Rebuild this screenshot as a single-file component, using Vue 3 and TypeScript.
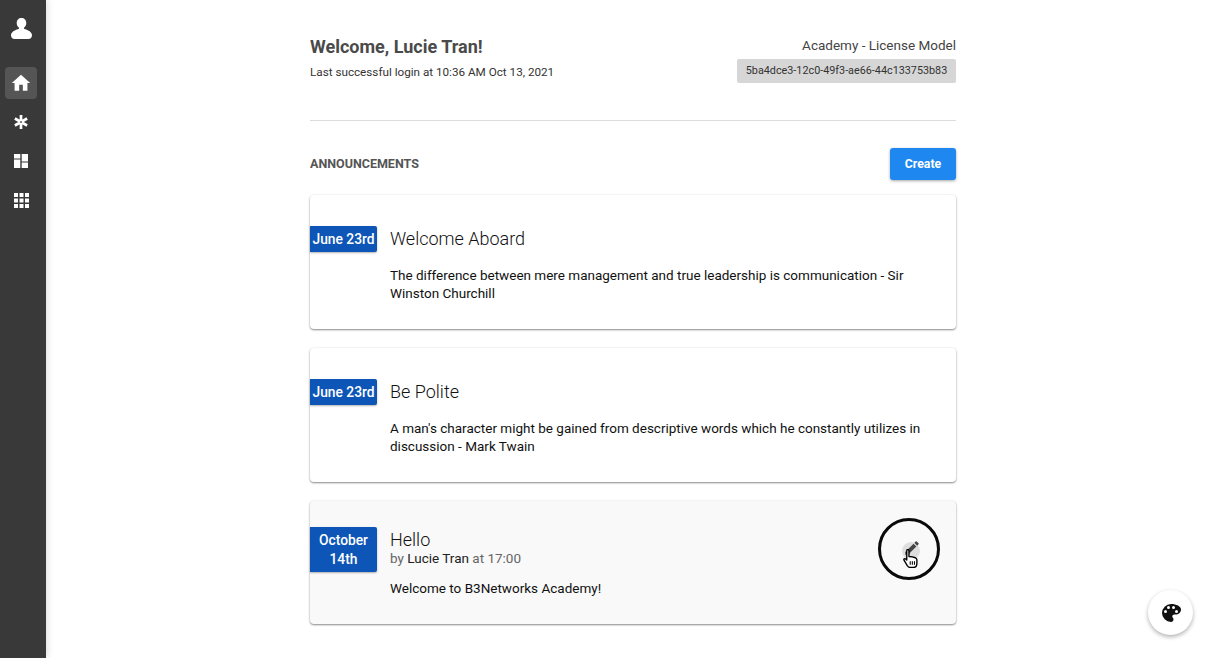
<script setup lang="ts">
interface Post {
  date: string[];
  title: string;
  body: string;
  author?: string;
  time?: string;
  hover?: boolean;
}
const posts: Post[] = [
  { date: ['June 23rd'], title: 'Welcome Aboard', body: 'The difference between mere management and true leadership is communication - Sir Winston Churchill' },
  { date: ['June 23rd'], title: 'Be Polite', body: "A man's character might be gained from descriptive words which he constantly utilizes in discussion - Mark Twain" },
  { date: ['October', '14th'], title: 'Hello', author: 'Lucie Tran', time: '17:00', body: 'Welcome to B3Networks Academy!', hover: true },
];
</script>

<template>
  <div class="app">
    <nav class="rail">
      <svg class="avatar" viewBox="0 0 21 21" width="21" height="21"><path fill="#fff" d="M10.500 0C7.700 0 5.700 2.100 5.700 4.900c0 2 .9 3.700 2.200 4.700v1.300C4.500 11.800 0 13.400 0 17.300 0 19.600 1.500 21 3.500 21h14c2 0 3.500-1.400 3.500-3.700 0-3.900-4.500-5.500-7.900-6.400V9.600c1.300-1 2.200-2.700 2.200-4.700C15.300 2.100 13.300 0 10.500 0z"/></svg>
      <div class="rail-item active">
        <svg viewBox="0 0 24 24" width="22" height="22"><path fill="#fff" d="M10 20.500v-6.500h4v6.500h5v-8.500h3L12 3 2 12h3v8.500z"/></svg>
      </div>
      <div class="rail-item">
        <svg viewBox="0 0 14 14" width="14" height="14"><path stroke="#fff" stroke-width="2.700" d="M7 0v14M.9 3.500l12.200 7M.9 10.500l12.200-7"/><circle cx="7" cy="7" r="1.100" fill="#666"/></svg>
      </div>
      <div class="rail-item">
        <svg viewBox="0 0 14 14" width="14" height="14"><path fill="#fff" d="M0 0h6.300v4.500H0zM0 5.500h6.300V14H0zM7.700 0H14v7.500H7.700zM7.700 8.500H14V14H7.700z"/></svg>
      </div>
      <div class="rail-item">
        <svg viewBox="0 0 15 15" width="15" height="15"><path fill="#fff" d="M0 0h4v4H0zM5.500 0h4v4h-4zM11 0h4v4h-4zM0 5.500h4v4H0zM5.500 5.500h4v4h-4zM11 5.500h4v4h-4zM0 11h4v4H0zM5.500 11h4v4h-4zM11 11h4v4h-4z"/></svg>
      </div>
    </nav>

    <main class="main">
      <div class="content">
        <header class="head">
          <div>
            <h1>Welcome, Lucie Tran!</h1>
            <p class="login">Last successful login at 10:36 AM Oct 13, 2021</p>
          </div>
          <div class="license">
            <div class="license-name">Academy - License Model</div>
            <div class="license-id">5ba4dce3-12c0-49f3-ae66-44c133753b83</div>
          </div>
        </header>

        <div class="section-head">
          <h2>ANNOUNCEMENTS</h2>
          <button class="create" type="button">Create</button>
        </div>

        <section class="list">
          <article v-for="post in posts" :key="post.title" class="card" :class="{ hover: post.hover }">
            <div class="date"><span v-for="line in post.date" :key="line">{{ line }}</span></div>
            <div class="text">
              <h3>{{ post.title }}</h3>
              <p v-if="post.author" class="meta">by <b>{{ post.author }}</b> at {{ post.time }}</p>
              <p class="body">{{ post.body }}</p>
            </div>
            <div v-if="post.hover" class="ring">
              <span class="ripple"></span>
              <svg class="pen" viewBox="0 0 24 24" width="18" height="18"><path fill="#444" d="M3 17.250V21h3.750L17.810 9.940l-3.750-3.750L3 17.250zM20.710 7.040a1 1 0 0 0 0-1.410l-2.340-2.340a1 1 0 0 0-1.410 0l-1.830 1.830 3.750 3.750 1.830-1.830z"/></svg>
              <svg class="hand" viewBox="1 1 13.500 18" width="15" height="19"><path fill="#fff" stroke="#000" stroke-width="1.300" stroke-linejoin="round" d="M5 1.500c.8 0 1.300.6 1.300 1.400v5.200c2.500.2 7.500.7 7.500 3v3.400c0 2.300-1.300 4-3.300 4H7.300c-1.200 0-1.900-.7-2.600-1.700L1.600 11.500c-.5-.8.700-1.900 1.600-1.100l1 1V2.900c0-.8.100-1.400.8-1.400z"/><path stroke="#000" stroke-width="1" d="M7.500 12.500v3.500M9.500 12.500v3.500M11.500 12.500v3.500"/></svg>
            </div>
          </article>
        </section>
      </div>
    </main>

    <button class="fab" type="button" aria-label="Theme">
      <svg viewBox="0 0 24 24" width="24" height="24"><path fill="#111" d="M12 3a9 9 0 0 0 0 18c1.400 0 2.500-1.100 2.500-2.500 0-.6-.2-1.200-.6-1.700-.4-.4-.6-.9-.6-1.400 0-1.100.9-2 2-2h1.700c2.700 0 5-2.200 5-5C22 5.500 17.500 3 12 3zM6.500 12a1.500 1.500 0 1 1 0-3 1.500 1.500 0 0 1 0 3zm3-4a1.500 1.500 0 1 1 0-3 1.500 1.500 0 0 1 0 3zm5 0a1.500 1.500 0 1 1 0-3 1.500 1.500 0 0 1 0 3zm3 4a1.500 1.500 0 1 1 0-3 1.500 1.500 0 0 1 0 3z"/></svg>
    </button>
  </div>
</template>

<style>
html, body { margin: 0; background: #fff; overflow: hidden; }
</style>

<style scoped>
.app {
  display: flex;
  height: 658px;
  overflow: hidden;
  font-family: Roboto, "Liberation Sans", sans-serif;
  color: #111;
}
.rail {
  width: 46px;
  flex: none;
  background: #393939;
  box-shadow: 2px 0 6px rgba(0, 0, 0, 0.12);
  display: flex;
  flex-direction: column;
  align-items: center;
  padding: 18px 4px 0 0;
  box-sizing: border-box;
}
.avatar { margin-bottom: 28px; }
.rail-item {
  width: 32px;
  height: 32px;
  margin-bottom: 7px;
  border-radius: 4px;
  display: flex;
  align-items: center;
  justify-content: center;
}
.rail-item.active { background: #555; }
.main { flex: 1; display: flex; justify-content: center; padding-left: 2px; }
.content { width: 646px; }
.head {
  display: flex;
  justify-content: space-between;
  height: 121px;
  box-sizing: border-box;
  padding-top: 36px;
  border-bottom: 1px solid #dcdcdc;
}
h1 {
  margin: 0;
  font-size: 18px;
  line-height: 22px;
  font-weight: 700;
  color: #4a4a4a;
}
.login { margin: 6px 0 0; font-size: 11.700px; line-height: 16px; color: #333; }
.license { display: flex; flex-direction: column; align-items: flex-end; }
.license-name { font-size: 13.500px; line-height: 18px; color: #444; margin-bottom: 5px; }
.license-id {
  background: #d6d6d6;
  border-radius: 2px;
  font-size: 10.800px;
  line-height: 24px;
  height: 24px;
  width: 219px;
  text-align: center;
  color: #333;
}
.section-head {
  display: flex;
  justify-content: space-between;
  align-items: center;
  margin-top: 27px;
}
h2 { margin: 0 0 2px; font-size: 12.500px; font-weight: 700; color: #555; }
.create {
  width: 66px;
  height: 32px;
  border: 0;
  border-radius: 3px;
  background: #1e88f0;
  color: #fff;
  font: 700 12.300px Roboto, sans-serif;
  box-shadow: 0 1px 3px rgba(0, 0, 0, 0.35);
  padding: 0;
}
.list { display: flex; flex-direction: column; gap: 19px; margin-top: 15px; }
.card {
  position: relative;
  display: flex;
  align-items: flex-start;
  background: #fff;
  border-radius: 4px;
  box-shadow: 0 1px 2px rgba(0, 0, 0, 0.45), 0 0 3px rgba(0, 0, 0, 0.06);
  height: 134px;
  box-sizing: border-box;
  padding-top: 31px;
}
.card.hover { background: #f9f9f9; height: 123px; padding-top: 26px; }
.date {
  width: 67px;
  flex: none;
  background: #0d56b8;
  color: #fff;
  font-size: 13.800px;
  font-weight: 500;
  line-height: 19px;
  padding: 4px 0 3px;
  text-align: center;
  display: flex;
  flex-direction: column;
  border-radius: 0 2px 2px 0;
  box-shadow: 0 1px 2px rgba(0, 0, 0, 0.3);
}
.text { margin: 1px 0 0 13px; flex: 1; padding-right: 30px; }
h3 {
  margin: 0;
  font-size: 18px;
  line-height: 24px;
  font-weight: 300;
  color: #111;
}
.hover h3 { line-height: 23px; }
.meta { margin: 0; font-size: 13.500px; line-height: 14px; color: #666; }
.meta b { font-weight: 400; color: #222; }
.body { margin: 15px 0 0; font-size: 13.500px; line-height: 18px; color: #111; }
.hover .body { margin-top: 14px; }
.ring {
  position: absolute;
  left: 568px;
  top: 17px;
  width: 62px;
  height: 62px;
  box-sizing: border-box;
  border: 3px solid #0a0a0a;
  border-radius: 50%;
}
.ripple {
  position: absolute;
  left: 21px;
  top: 21px;
  width: 18px;
  height: 18px;
  border-radius: 50%;
  background: #dedede;
}
.pen { position: absolute; left: 22px; top: 18px; }
.hand { position: absolute; left: 22px; top: 28px; }
.fab {
  position: absolute;
  left: 1148px;
  top: 590px;
  width: 45px;
  height: 45px;
  border: 0;
  border-radius: 50%;
  background: #fff;
  box-shadow: 0 2px 4px rgba(0, 0, 0, 0.3);
  display: flex;
  align-items: center;
  justify-content: center;
  padding: 0;
}
</style>
